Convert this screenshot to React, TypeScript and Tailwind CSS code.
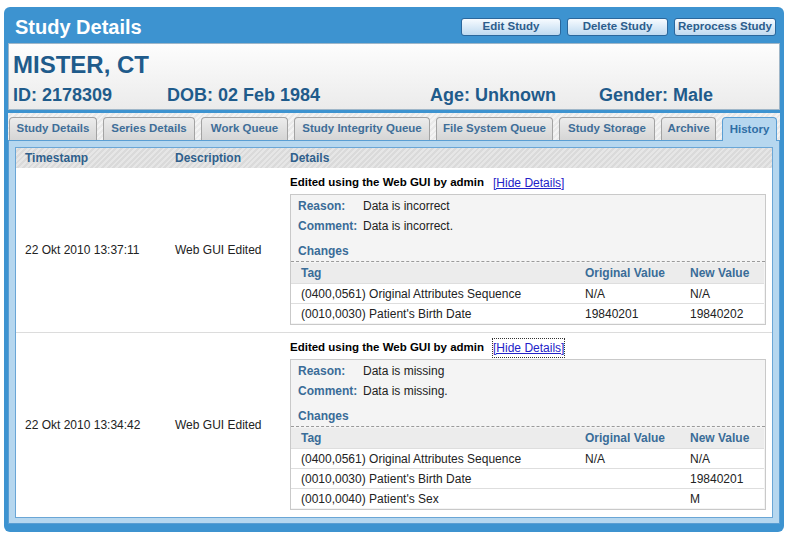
import React from "react";

type Change = { tag: string; orig: string; next: string };

interface HistoryEntry {
  timestamp: string;
  description: string;
  reason: string;
  comment: string;
  changes: Change[];
  focused?: boolean;
}

const entries: HistoryEntry[] = [
  {
    timestamp: "22 Okt 2010 13:37:11",
    description: "Web GUI Edited",
    reason: "Data is incorrect",
    comment: "Data is incorrect.",
    changes: [
      { tag: "(0400,0561) Original Attributes Sequence", orig: "N/A", next: "N/A" },
      { tag: "(0010,0030) Patient's Birth Date", orig: "19840201", next: "19840202" },
    ],
  },
  {
    timestamp: "22 Okt 2010 13:34:42",
    description: "Web GUI Edited",
    reason: "Data is missing",
    comment: "Data is missing.",
    focused: true,
    changes: [
      { tag: "(0400,0561) Original Attributes Sequence", orig: "N/A", next: "N/A" },
      { tag: "(0010,0030) Patient's Birth Date", orig: "", next: "19840201" },
      { tag: "(0010,0040) Patient's Sex", orig: "", next: "M" },
    ],
  },
];

const tabs = [
  { label: "Study Details", w: "w-[88px]" },
  { label: "Series Details", w: "w-[92px]" },
  { label: "Work Queue", w: "w-[87px]" },
  { label: "Study Integrity Queue", w: "w-[136px]" },
  { label: "File System Queue", w: "w-[117px]" },
  { label: "Study Storage", w: "w-[96px]" },
  { label: "Archive", w: "w-[55px]" },
  { label: "History", w: "w-[55px]", active: true },
];

function ToolButton({ label, w }: { label: string; w: string }) {
  return (
    <button
      type="button"
      className={`${w} h-[18px] rounded-[3px] border border-[#2a679c] bg-gradient-to-b from-[#f7fbff] to-[#bfdaf0] text-[11.5px] font-bold leading-none text-[#2c5d8c]`}
    >
      {label}
    </button>
  );
}

function DetailsBox({ entry }: { entry: HistoryEntry }) {
  return (
    <div className="border border-[#c9c9c9] bg-[#f4f4f4] pt-[1px] pb-[1px]">
      <div className="grid grid-cols-[65px_1fr] px-[7px] text-[12px]">
        <div className="flex h-[20px] items-center font-bold text-[#3a6c98]">Reason:</div>
        <div className="flex h-[20px] items-center text-[#222]">{entry.reason}</div>
        <div className="flex h-[20px] items-center font-bold text-[#3a6c98]">Comment:</div>
        <div className="flex h-[20px] items-center text-[#222]">{entry.comment}</div>
      </div>
      <div className="mt-[5px] flex h-[21px] items-center border-b border-dashed border-[#9a9a9a] px-[7px] text-[12px] font-bold text-[#3a6c98]">
        Changes
      </div>
      <div className="mt-[1px] mr-[1px] text-[12px]">
        <div className="grid h-[20px] grid-cols-[294px_105px_1fr] items-center bg-[#ececec] font-bold text-[#3a6c98]">
          <div className="pl-[10px]">Tag</div>
          <div>Original Value</div>
          <div>New Value</div>
        </div>
        {entry.changes.map((c) => (
          <div
            key={c.tag}
            className="grid h-[20px] grid-cols-[294px_105px_1fr] items-center border-t border-[#dedede] bg-white text-[#222]"
          >
            <div className="pl-[10px]">{c.tag}</div>
            <div>{c.orig}</div>
            <div>{c.next}</div>
          </div>
        ))}
      </div>
    </div>
  );
}

export default function App() {
  return (
    <div className="h-[537px] w-[790px] overflow-hidden bg-white pt-[7px] pl-[4px] font-['Liberation_Sans',Arial,sans-serif]">
      <div className="w-[780px] rounded-[6px] bg-[#3d93d0] px-[4px] pb-[8px]">
        {/* Title bar */}
        <div className="flex h-[36px] items-center justify-between pt-[4px] pl-[7px] pr-[4px]">
          <h1 className="text-[20px] font-bold leading-none text-white">Study Details</h1>
          <div className="flex gap-[6px]">
            <ToolButton label="Edit Study" w="w-[100px]" />
            <ToolButton label="Delete Study" w="w-[101px]" />
            <ToolButton label="Reprocess Study" w="w-[102px]" />
          </div>
        </div>

        {/* Patient summary */}
        <div className="h-[67px] border border-[#9fb6c8] bg-gradient-to-b from-[#fdfdfd] to-[#ebebeb] pl-[4px] pt-[7px]">
          <div className="h-[28px] text-[24px] font-bold leading-[28px] text-[#1f5b8b]">MISTER, CT</div>
          <div className="mt-[5px] flex h-[22px] items-center text-[18px] font-bold text-[#1f5b8b]">
            <div className="w-[154px]">ID: 2178309</div>
            <div className="w-[263px]">DOB: 02 Feb 1984</div>
            <div className="w-[169px]">Age: Unknown</div>
            <div>Gender: Male</div>
          </div>
        </div>

        {/* Tabs */}
        <div className="mt-[3px] flex h-[27px] items-end gap-[6px] bg-[repeating-linear-gradient(135deg,#f3f3f3_0px,#f3f3f3_2px,#e9e9e9_2px,#e9e9e9_4px)] pl-[1px]">
          {tabs.map((t) =>
            t.active ? (
              <div
                key={t.label}
                className={`${t.w} relative -mb-[1px] flex h-[24px] items-center justify-center rounded-t-[4px] border border-b-0 border-[#5a9ed3] bg-[#b6d7ef] text-[11.5px] font-bold text-[#2f6ea5]`}
              >
                {t.label}
              </div>
            ) : (
              <div
                key={t.label}
                className={`${t.w} flex h-[23px] items-center justify-center rounded-t-[4px] border border-b-0 border-[#a3a3a3] bg-gradient-to-b from-[#ececec] to-[#d5d5d5] text-[11.5px] font-bold text-[#3f6e98]`}
              >
                {t.label}
              </div>
            )
          )}
        </div>

        {/* Tab content */}
        <div className="border border-[#5a9ed3] bg-[#b6d7ef] pt-[6px] pb-[5px] pl-[6px] pr-[6px]">
          <div className="border border-[#6aa6d6] bg-white">
            <div className="grid h-[20px] grid-cols-[150px_115px_1fr] items-center bg-[repeating-linear-gradient(135deg,#e6e6e6_0px,#e6e6e6_2px,#dadada_2px,#dadada_4px)] text-[12px] font-bold text-[#2f5f8c]">
              <div className="pl-[9px]">Timestamp</div>
              <div className="pl-[9px]">Description</div>
              <div className="pl-[9px]">Details</div>
            </div>
            {entries.map((e, i) => (
              <div
                key={e.timestamp}
                className={`grid grid-cols-[150px_115px_1fr] text-[12px] text-[#222] ${
                  i < entries.length - 1 ? "border-b border-[#dcdcdc]" : ""
                }`}
              >
                <div className="flex items-center pl-[9px]">{e.timestamp}</div>
                <div className="flex items-center pl-[9px]">{e.description}</div>
                <div className="pt-[7px] pb-[7px] pl-[9px] pr-[6px]">
                  <div className="mb-[3px] flex h-[16px] items-center">
                    <span className="text-[11.5px] font-bold text-black">
                      Edited using the Web GUI by admin
                    </span>
                    <a
                      href="#"
                      className={`ml-[9px] text-[12px] text-[#2222c8] underline ${
                        e.focused ? "outline-1 outline-dotted outline-[#333]" : ""
                      }`}
                    >
                      [Hide Details]
                    </a>
                  </div>
                  <DetailsBox entry={e} />
                </div>
              </div>
            ))}
          </div>
        </div>
      </div>
    </div>
  );
}
